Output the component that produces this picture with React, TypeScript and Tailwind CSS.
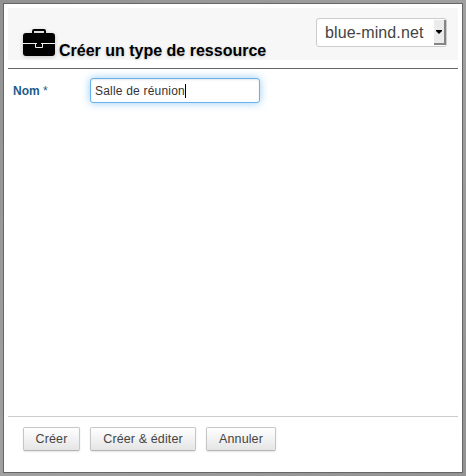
import React from "react";

function BriefcaseIcon() {
  return (
    <svg
      width="32"
      height="28"
      viewBox="0 0 32 28"
      className="shrink-0 drop-shadow-[0_1px_2px_rgba(0,0,0,0.2)]"
      aria-hidden="true"
    >
      <path
        fillRule="evenodd"
        d="M9 4V2Q9 0 11 0H21Q23 0 23 2V4H29Q32 4 32 7V24Q32 27 29 27H3Q0 27 0 24V7Q0 4 3 4ZM11 4H21V2H11Z"
      />
      <path d="M0 14.500H32" fill="none" stroke="#f0f0f0" />
      <path d="M12.500 14.500V18.500H19.500V14.500" fill="none" stroke="#f0f0f0" />
      <path d="M14 14H18V17H14Z" />
    </svg>
  );
}

function Button({ label, width }: { label: string; width: string }) {
  return (
    <button
      className={`${width} h-6 shrink-0 whitespace-nowrap rounded-[2px] border border-[#c6c6c6] border-b-[#b5b5b5] bg-linear-to-b from-white to-[#e5e5e5] text-[12.5px] leading-[22px] tracking-[0.12px] text-[#444] shadow-[0_1px_2px_rgba(0,0,0,0.1)]`}
    >
      {label}
    </button>
  );
}

export default function App() {
  return (
    <div className="h-[476px] w-[466px] bg-linear-to-br from-[#929292] via-[#a0a0a0] to-[#929292] p-[3px] font-['Liberation_Sans',Arial,sans-serif]">
      <main className="flex h-[470px] w-[460px] flex-col border border-[#666] bg-white p-1">
        <header className="flex h-[52px] items-start justify-between bg-[#f7f7f7] pl-[15px] pr-[11px]">
          <div className="flex pt-[21px]">
            <BriefcaseIcon />
            <h1 className="ml-1 mt-[13px] whitespace-nowrap text-[16px] font-bold leading-[18px] text-black [text-shadow:0_1px_3px_rgba(0,0,0,0.2)]">
              Créer un type de ressource
            </h1>
          </div>
          <div className="mt-[10px] flex h-[29px] w-[131px] rounded-[3px] border border-[#ccc] bg-white">
            <span className="flex-1 whitespace-nowrap pl-2 text-[16px] leading-[28px] tracking-[0.12px] text-[#444]">
              blue-mind.net
            </span>
            <span className="my-px flex w-[12px] items-center justify-center border-b-2 border-r-2 border-[#858585] bg-[#ebebeb]">
              <svg width="6" height="4" viewBox="0 0 6 4">
                <path d="M0 0H6V1L3 4L0 1Z" />
              </svg>
            </span>
          </div>
        </header>
        <section className="mt-2 flex flex-1 items-start border-t border-[#666] pl-[5px] pt-[9px]">
          <label className="w-[77px] pt-px text-[12px] font-bold leading-[25px] text-[#1c5d8a]">
            Nom <span className="font-normal">*</span>
          </label>
          <div className="flex h-[25px] w-[170px] items-center rounded-[3px] border border-[#66b3f0] bg-white pl-1 text-[12px] tracking-[0.2px] text-[#333] shadow-[0_0_8px_rgba(82,168,236,0.6),inset_0_1px_2px_rgba(0,0,0,0.1)]">
            <span className="whitespace-nowrap">Salle de réunion</span>
            <span className="h-[14px] w-px bg-black" />
          </div>
        </section>
        <footer className="flex h-[52px] gap-[10px] border-t border-[#ccc] pl-[15px] pt-[10px]">
          <Button label="Créer" width="w-[57px]" />
          <Button label="Créer &amp; éditer" width="w-[106px]" />
          <Button label="Annuler" width="w-[70px]" />
        </footer>
      </main>
    </div>
  );
}
